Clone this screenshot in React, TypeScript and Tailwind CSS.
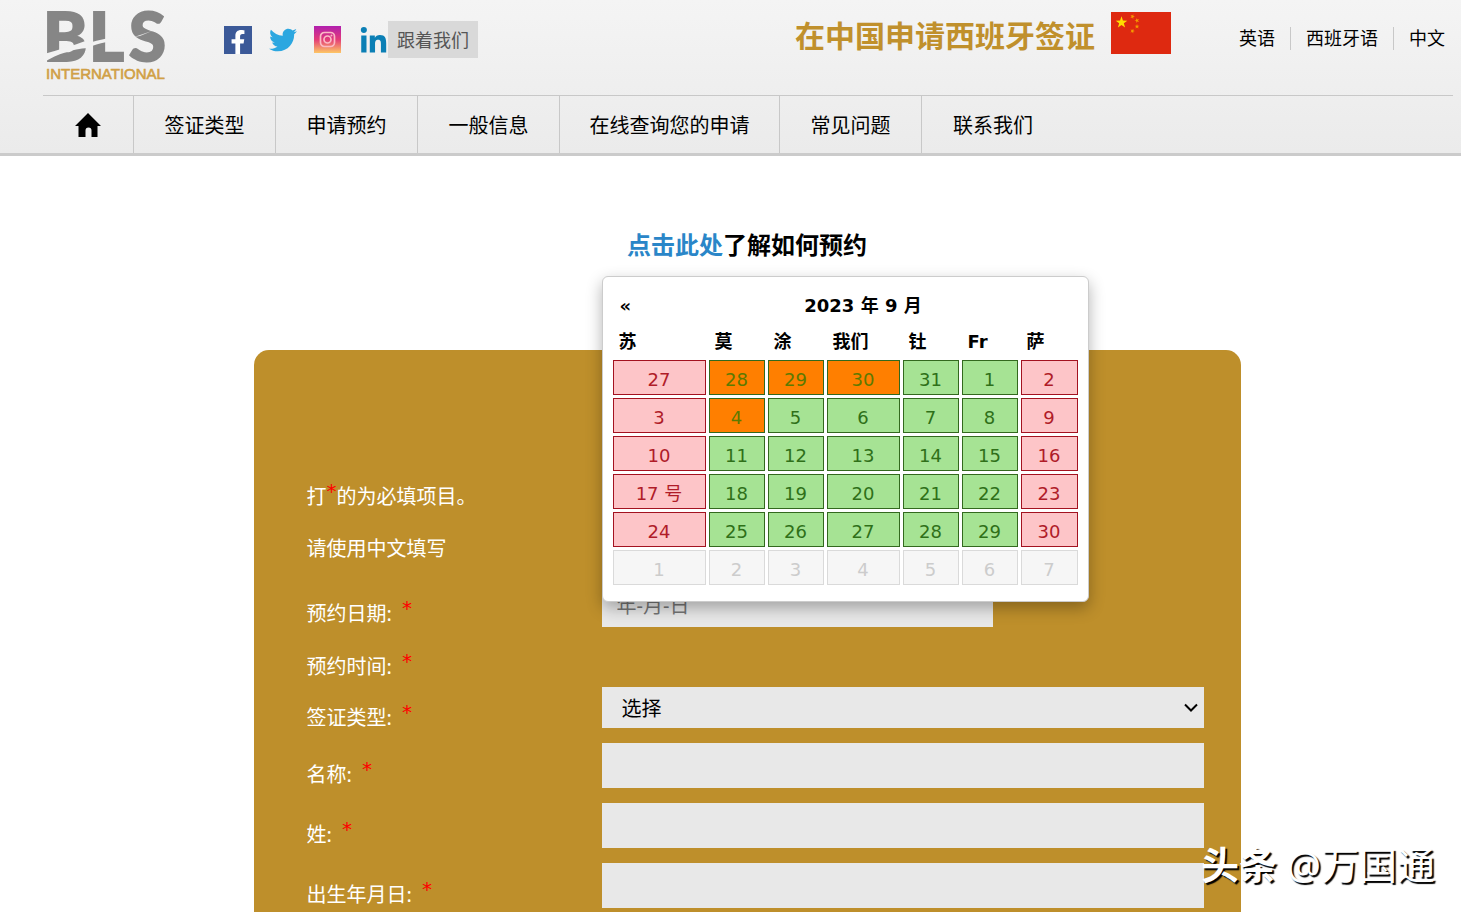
import { FaFacebookF, FaLinkedinIn, FaTwitter } from "react-icons/fa";
import clsx from "clsx";

const navItems = [
  { label: "签证类型", width: "w-[142px]" },
  { label: "申请预约", width: "w-[142px]" },
  { label: "一般信息", width: "w-[142px]" },
  { label: "在线查询您的申请", width: "w-[220px]" },
  { label: "常见问题", width: "w-[142px]" },
  { label: "联系我们", width: "w-[142px]" },
];

const languages = ["英语", "西班牙语", "中文"];

const weekdays = ["苏", "莫", "涂", "我们", "钍", "Fr", "萨"];

// o = fully booked, g = available, r = closed, n = next month
const weeks = [
  { days: ["27", "28", "29", "30", "31", "1", "2"], states: "roooggr" },
  { days: ["3", "4", "5", "6", "7", "8", "9"], states: "roggggr" },
  { days: ["10", "11", "12", "13", "14", "15", "16"], states: "rgggggr" },
  { days: ["17 号", "18", "19", "20", "21", "22", "23"], states: "rgggggr" },
  { days: ["24", "25", "26", "27", "28", "29", "30"], states: "rgggggr" },
  { days: ["1", "2", "3", "4", "5", "6", "7"], states: "nnnnnnn" },
];

const dayColors: Record<string, string> = {
  o: "border-[#33691e] bg-[#ff7f00] text-[#5d7a00]",
  g: "border-[#33691e] bg-[#a6e394] text-[#2f7019]",
  r: "border-[#a31220] bg-[#fdc5c8] text-[#b01c28]",
  n: "border-[#dadada] bg-[#f6f6f6] text-[#cccccc]",
};

function Logo() {
  return (
    <svg
      width="126"
      height="76"
      viewBox="0 0 126 76"
      className="overflow-visible"
      role="img"
      aria-label="BLS International"
    >
      <text
        y="53"
        fontSize="67"
        fontWeight="900"
        fill="#868686"
        stroke="#868686"
        strokeWidth="2"
        fontFamily="Lato, sans-serif"
      >
        <tspan x="-3">B</tspan>
        <tspan x="43">L</tspan>
        <tspan x="83">S</tspan>
      </text>
      <path d="M-2 46C12 42 26 38 42 32V40C26 41 12 46 -2 54Z" fill="#f2f2f2" />
      <path d="M46 34C52 32 58 31 64 30V34C58 34 52 36 46 38Z" fill="#f2f2f2" />
      <path d="M88 29 106 23 94 28Z" fill="#e4e4e4" />
      <text x="0" y="71" fontSize="15" fill="#d0a046" stroke="#d0a046" strokeWidth="0.6" fontFamily="Liberation Sans, sans-serif">
        INTERNATIONAL
      </text>
    </svg>
  );
}

function InstagramIcon() {
  return (
    <svg width="27" height="27" viewBox="0 0 27 27" fill="none">
      <defs>
        <linearGradient id="insta" x1="0" y1="0" x2="0" y2="1">
          <stop offset="0" stopColor="#b01fae" />
          <stop offset="0.5" stopColor="#e33b78" />
          <stop offset="1" stopColor="#fdc765" />
        </linearGradient>
      </defs>
      <rect width="27" height="27" fill="url(#insta)" />
      <rect x="6.5" y="6.5" width="14" height="14" rx="4" stroke="#fbb9c4" strokeWidth="1.7" />
      <circle cx="13.5" cy="13.5" r="3.5" stroke="#fbb9c4" strokeWidth="1.7" />
      <circle cx="17.5" cy="9.5" r="1" fill="#fbb9c4" />
    </svg>
  );
}

function ChinaFlag() {
  const star = "M0 -5.6 1.3 -1.8 5.3 -1.7 2.1 0.7 3.3 4.5 0 2.2 -3.3 4.5 -2.1 0.7 -5.3 -1.7 -1.3 -1.8Z";
  return (
    <svg width="60" height="42" viewBox="0 0 60 42" role="img" aria-label="中国">
      <rect width="60" height="42" fill="#de2910" />
      <path d={star} transform="translate(10.5 10.5) scale(1.1)" fill="#ffde00" />
      <g fill="#f59a00">
        <path d={star} transform="translate(21.5 4.5) rotate(20) scale(.45)" />
        <path d={star} transform="translate(26 8.5) rotate(-20) scale(.45)" />
        <path d={star} transform="translate(26 14.5) scale(.45)" />
        <path d={star} transform="translate(21.5 19) rotate(20) scale(.45)" />
      </g>
    </svg>
  );
}

function HomeIcon() {
  return (
    <svg width="26" height="24" viewBox="0 0 26 24" fill="#000">
      <path d="M13 0 26 13H22.5V24H16.5V17.5A3 3 0 0 0 10.5 17.5V24H3.5V13H0Z" />
    </svg>
  );
}

function Header() {
  return (
    <header className="border-b-[3px] border-[#cbcbcb] bg-linear-to-b from-[#f4f4f4] to-[#ebebeb] pr-2 pl-[43px]">
      <div className="flex h-[95px] items-start">
        <a href="#" className="mt-2 ml-[3px]">
          <Logo />
        </a>
        <div className="mt-[21px] ml-[52px] flex items-center">
          <a
            href="#"
            aria-label="Facebook"
            className="flex size-7 items-end justify-end overflow-hidden bg-[#3b5998] pt-1 pr-[2px] text-white"
          >
            <FaFacebookF size={24} />
          </a>
          <a href="#" aria-label="Twitter" className="ml-[17px] text-[#2ca7e0]">
            <FaTwitter size={28} />
          </a>
          <a href="#" aria-label="Instagram" className="ml-[17px]">
            <InstagramIcon />
          </a>
          <a href="#" aria-label="LinkedIn" className="ml-[18px] pt-1 text-[#0b7fb5]">
            <FaLinkedinIn size={29} />
          </a>
          <span className="bg-[#d9d9d9] px-[9px] pt-px text-lg leading-9 text-[#555]">跟着我们</span>
        </div>
        <h1 className="mt-[14px] ml-auto text-3xl leading-[44px] font-bold text-[#c0902c]">在中国申请西班牙签证</h1>
        <div className="mt-3 ml-4">
          <ChinaFlag />
        </div>
        <ul className="mt-[27px] ml-[53px] flex divide-x divide-[#c8c8c8]">
          {languages.map((lang) => (
            <li key={lang} className="px-[15px] leading-[22px] last:pr-2">
              <a href="#" className="text-lg leading-[22px]">
                {lang}
              </a>
            </li>
          ))}
        </ul>
      </div>
      <nav className="flex h-[58px] border-t border-[#c8c8c8] text-xl">
        <a href="#" aria-label="首页" className="flex w-[91px] items-center justify-center border-r border-[#c8c8c8]">
          <HomeIcon />
        </a>
        {navItems.map((item) => (
          <a
            key={item.label}
            href="#"
            className={clsx("flex items-center justify-center border-r border-[#c8c8c8] pt-[2px] last:border-r-0", item.width)}
          >
            {item.label}
          </a>
        ))}
      </nav>
    </header>
  );
}

function Calendar() {
  return (
    <div className="absolute bottom-[25px] left-0 z-10 w-[487px] rounded-[6px] border border-[#ccc] bg-white px-[7px] pt-1 pb-[13px] font-['DejaVu_Sans','Noto_Sans_CJK_SC',sans-serif] text-lg text-black shadow-[0_6px_16px_rgba(0,0,0,0.3)]">
      <table className="w-full table-fixed border-separate border-spacing-[3px]">
        <colgroup>
          <col className="w-[93px]" />
          <col className="w-[56px]" />
          <col className="w-[56px]" />
          <col className="w-[73px]" />
          <col className="w-[56px]" />
          <col className="w-[56px]" />
          <col />
        </colgroup>
        <thead>
          <tr>
            <th className="h-[35px] p-0 pt-2 pl-[7px] text-left leading-[27px]">
              <button type="button" aria-label="上个月" className="block">
                «
              </button>
            </th>
            <th colSpan={5} className="h-[35px] p-0 pt-2 leading-[27px]">
              2023 年 9 月
            </th>
            <th className="p-0" />
          </tr>
          <tr>
            {weekdays.map((day) => (
              <th key={day} className="h-[35px] p-0 pt-1 pl-[6px] text-left leading-[31px]">
                {day}
              </th>
            ))}
          </tr>
        </thead>
        <tbody>
          {weeks.map((week, row) => (
            <tr key={row}>
              {week.days.map((day, i) => (
                <td key={i} className="p-0">
                  <button
                    type="button"
                    className={clsx("block h-[35px] w-full border pt-1 leading-[29px]", dayColors[week.states[i]])}
                  >
                    {day}
                  </button>
                </td>
              ))}
            </tr>
          ))}
        </tbody>
      </table>
    </div>
  );
}

function Required() {
  return <span className="relative -top-[6px] font-['DejaVu_Sans',sans-serif] text-[#ff0000]">*</span>;
}

function Label({ htmlFor, text }: { htmlFor: string; text: string }) {
  return (
    <label htmlFor={htmlFor} className="flex gap-[10px] pt-[18px] leading-[28px]">
      {text}
      <Required />
    </label>
  );
}

const textFields = [
  { id: "first-name", label: "名称:" },
  { id: "last-name", label: "姓:" },
  { id: "birth-date", label: "出生年月日:" },
];

export default function App() {
  return (
    <div className="relative overflow-hidden bg-white font-['Noto_Sans','Noto_Sans_CJK_SC',sans-serif] text-black">
      <Header />
      <main className="pr-[9px] pl-[42px]">
        <h2 className="pt-[71px] text-center text-2xl leading-9 font-bold">
          <a href="#" className="text-[#2a86c8]">
            点击此处
          </a>
          了解如何预约
        </h2>
        <form className="mx-auto mt-[87px] w-[70%] rounded-t-[15px] bg-[#be8f2b] pt-[133px] pr-[37px] pb-1 pl-[53px] text-xl text-white">
          <p className="leading-[28px]">
            打<Required />
            的为必填项目。
          </p>
          <p className="mt-6 leading-[28px]">请使用中文填写</p>

          <div className="mt-[19px] grid grid-cols-[295px_1fr] gap-y-[15px]">
            <div className="h-[45px]">
              <Label htmlFor="visit-date" text="预约日期:" />
            </div>
            <div className="relative">
              <input
                id="visit-date"
                placeholder="年-月-日"
                className="block h-[45px] w-[65%] bg-[#e8e8e8] px-[15px] pt-[2px] text-xl text-black outline-none placeholder:text-[#757575]"
              />
              <Calendar />
            </div>

            <p className="flex h-[30px] gap-[10px] pt-[11px] leading-[28px]">
              预约时间:
              <Required />
            </p>
            <div />

            <div className="-mt-px h-[42px]">
              <Label htmlFor="visa-type" text="签证类型:" />
            </div>
            <div className="relative">
              <select
                id="visa-type"
                className="block h-[41px] w-full appearance-none bg-[#e8e8e8] px-5 pt-[2px] text-xl text-black outline-none"
              >
                <option>选择</option>
              </select>
              <svg
                className="pointer-events-none absolute top-4 right-[6px]"
                width="14"
                height="10"
                viewBox="0 0 14 10"
                fill="none"
                stroke="#000"
                strokeWidth="2"
              >
                <path d="M1 1.5 7 7.5 13 1.5" />
              </svg>
            </div>

            {textFields.map((field) => (
              <div key={field.id} className="col-span-2 grid h-[45px] grid-cols-subgrid">
                <Label htmlFor={field.id} text={field.label} />
                <input id={field.id} className="h-[45px] w-full bg-[#e8e8e8] px-[15px] text-black outline-none" />
              </div>
            ))}
          </div>
        </form>
      </main>
      <p className="absolute right-[26px] bottom-[22px] z-20 text-[38px] leading-[52px] text-white [text-shadow:2px_2px_1px_#000]">
        <span className="font-bold">头条</span> @万国通
      </p>
    </div>
  );
}
